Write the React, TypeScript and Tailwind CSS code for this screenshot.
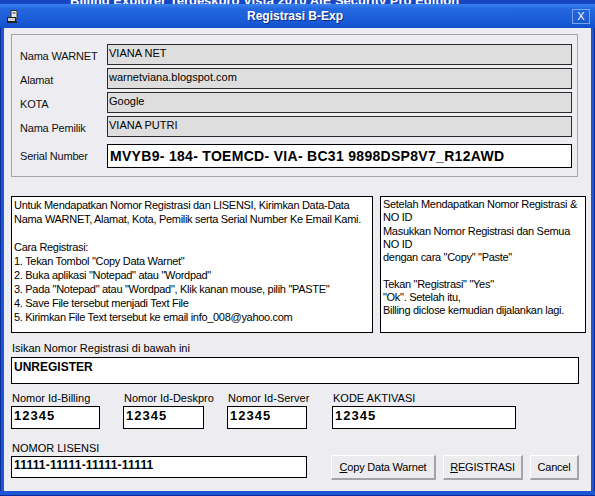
import React from "react";

const FONT = { fontFamily: '"Liberation Sans", Arial, sans-serif' };

function TopField({ value }: { value: string }) {
  return (
    <div className="h-[21px] flex-1 border border-[#2b2b2b] bg-[#dedede] px-[1px] pt-[2px] text-[11px] leading-[13px] text-black">
      {value}
    </div>
  );
}

function Row({ label, value }: { label: string; value: string }) {
  return (
    <div className="flex items-center">
      <div className="w-[87px] pt-[3px] text-[11px] leading-[13px] tracking-[-0.2px] text-[#111]">{label}</div>
      <TopField value={value} />
    </div>
  );
}

function Box({ value, w, h = "h-[23px]", size = "text-[13px] tracking-[1px]" }: { value: string; w: string; h?: string; size?: string }) {
  return (
    <div className={`${w} ${h} border border-black bg-white px-[2px] pt-[1px] font-bold leading-[15px] text-black ${size}`}>
      {value}
    </div>
  );
}

function Btn({ children, w }: { children: React.ReactNode; w: string }) {
  return (
    <button className={`${w} h-[25px] border-t border-l border-b-2 border-r-2 border-t-white border-l-white border-b-[#a3a3a8] border-r-[#a3a3a8] bg-[#ececef] text-[11px] tracking-[-0.2px] text-black`}>
      {children}
    </button>
  );
}

export default function App() {
  return (
    <div className="flex h-[496px] w-[595px] flex-col overflow-hidden bg-[#1a4fcf]" style={FONT}>
      {/* strip of the window behind */}
      <div className="relative h-[4px] overflow-hidden bg-[#1646c2]">
        <div className="absolute left-[70px] top-[-9px] whitespace-nowrap text-[13px] font-bold text-white">
          Billing Explorer Terdeskpro Vista 2010 AIE Security Pro Edition
        </div>
      </div>

      {/* title bar */}
      <div className="flex h-[24px] items-center bg-[linear-gradient(180deg,#3a82ee_0%,#2468e0_20%,#1a5bd8_70%,#1150cc_100%)] pl-[7px] pr-[5px]">
        <svg width="11" height="13" viewBox="0 0 11 13" className="shrink-0">
          <rect x="4" y="0.5" width="6" height="8" fill="#e8e8e8" stroke="#333" />
          <rect x="5.5" y="2" width="3" height="2" fill="#888" />
          <rect x="0.5" y="7.5" width="8" height="4" fill="#cfcfcf" stroke="#222" />
          <rect x="0" y="11" width="10" height="2" fill="#222" />
        </svg>
        <div className="flex-1 text-center text-[12px] font-bold text-white [text-shadow:1px_1px_0_#0a2f8a]">
          Registrasi B-Exp
        </div>
        <div className="flex h-[15px] w-[18px] items-center justify-center border border-[#7aa3ee] text-[11px] leading-none text-white">
          X
        </div>
      </div>

      <div className="flex flex-1">
        <div className="w-[4px] border-l border-[#0a2c9a] bg-[#1a56d6]" />

        {/* client */}
        <div className="flex flex-1 flex-col bg-[#ededf1] pl-[7px] text-black">
          {/* data group */}
          <div className="mt-[6px] flex h-[143px] w-[567px] flex-col border border-[#a6a6aa] pl-[8px] pr-[5px] pt-[9px]">
            <div className="flex flex-col gap-[3px]">
              <Row label="Nama WARNET" value="VIANA NET" />
              <Row label="Alamat" value="warnetviana.blogspot.com" />
              <Row label="KOTA" value="Google" />
              <Row label="Nama Pemilik" value="VIANA PUTRI" />
            </div>
            <div className="mt-[7px] flex items-center">
              <div className="w-[87px] text-[11px] leading-[13px] tracking-[-0.2px] text-[#111]">Serial Number</div>
              <div className="h-[24px] flex-1 border border-black bg-white px-[2px] pt-[3px] text-[14px] font-bold leading-[16px] tracking-[0.3px]">
                MVYB9- 184- TOEMCD- VIA- BC31 9898DSP8V7_R12AWD
              </div>
            </div>
          </div>

          {/* info boxes */}
          <div className="mt-[19px] flex gap-[7px]">
            <div className="h-[137px] w-[362px] shrink-0 whitespace-nowrap border border-black bg-white pl-[2px] pt-[1px] text-[11px] leading-[14px] tracking-[-0.3px]">
              <div>Untuk Mendapatkan Nomor Registrasi dan LISENSI, Kirimkan Data-Data</div>
              <div>Nama WARNET, Alamat, Kota, Pemilik serta Serial Number Ke Email Kami.</div>
              <div>&nbsp;</div>
              <div>Cara Registrasi:</div>
              <div>1. Tekan Tombol "Copy Data Warnet"</div>
              <div>2. Buka aplikasi "Notepad" atau "Wordpad"</div>
              <div>3. Pada "Notepad" atau "Wordpad", Klik kanan mouse, pilih "PASTE"</div>
              <div>4. Save File tersebut menjadi Text File</div>
              <div>5. Kirimkan File Text tersebut ke email info_008@yahoo.com</div>
            </div>
            <div className="h-[137px] w-[206px] shrink-0 whitespace-nowrap border border-black bg-white pl-[2px] pt-[1px] text-[11px] leading-[13.3px] tracking-[-0.3px]">
              <div>Setelah Mendapatkan Nomor Registrasi &amp;</div>
              <div>NO ID</div>
              <div>Masukkan Nomor Registrasi dan Semua</div>
              <div>NO ID</div>
              <div>dengan cara "Copy" "Paste"</div>
              <div>&nbsp;</div>
              <div>Tekan "Registrasi" "Yes"</div>
              <div>"Ok". Setelah itu,</div>
              <div>Billing diclose kemudian dijalankan lagi.</div>
            </div>
          </div>

          {/* registration */}
          <div className="mt-[9px] pl-[1px] text-[11px] leading-[13px]">Isikan Nomor Registrasi di bawah ini</div>
          <div className="mt-[2px] h-[27px] w-[568px] border border-black bg-white px-[2px] pt-[2px] text-[12px] font-bold leading-[14px]">
            UNREGISTER
          </div>

          <div className="mt-[8px] flex text-[11px] leading-[13px]">
            <div className="flex w-[112px] flex-col gap-[1px]">
              <div className="pl-[1px]">Nomor Id-Billing</div>
              <Box value="12345" w="w-[89px]" />
            </div>
            <div className="flex w-[104px] flex-col gap-[1px]">
              <div className="pl-[1px]">Nomor Id-Deskpro</div>
              <Box value="12345" w="w-[81px]" />
            </div>
            <div className="flex w-[105px] flex-col gap-[1px]">
              <div className="pl-[1px]">Nomor Id-Server</div>
              <Box value="12345" w="w-[80px]" />
            </div>
            <div className="flex flex-col gap-[1px]">
              <div className="pl-[1px]">KODE AKTIVASI</div>
              <Box value="12345" w="w-[184px]" />
            </div>
          </div>

          <div className="mt-[13px] pl-[1px] text-[11px] leading-[13px]">NOMOR LISENSI</div>
          <div className="flex items-start">
            <Box value="11111-11111-11111-11111" w="w-[296px] mt-[1px]" h="h-[22px]" size="text-[12px] tracking-[0.2px]" />
            <div className="ml-[24px] flex gap-[7px]">
              <Btn w="w-[105px]"><span className="underline">C</span>opy Data Warnet</Btn>
              <Btn w="w-[80px]"><span className="underline">R</span>EGISTRASI</Btn>
              <Btn w="w-[49px]">Cancel</Btn>
            </div>
          </div>
        </div>

        <div className="w-[4px] border-r border-[#0a2c9a] bg-[#1a56d6]" />
      </div>
      <div className="h-[5px] border-b border-[#0a2c9a] bg-[#1a56d6]" />
    </div>
  );
}
